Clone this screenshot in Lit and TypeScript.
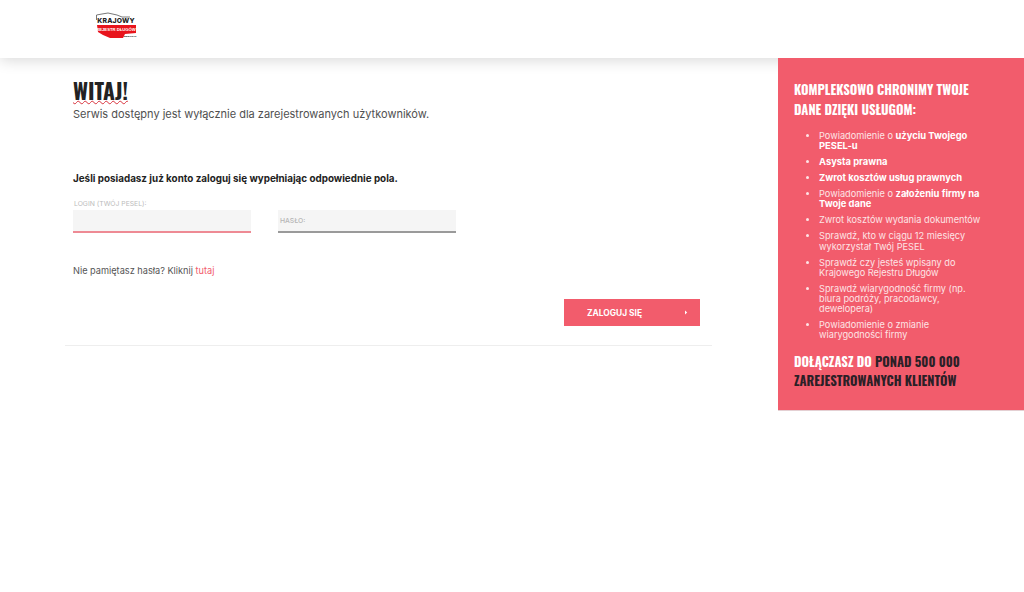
import { LitElement, html, css } from "lit";
import { customElement } from "lit/decorators.js";

const SERVICES = [
  html`Powiadomienie o <b>użyciu Twojego PESEL-u</b>`,
  html`<b>Asysta prawna</b>`,
  html`<b>Zwrot kosztów usług prawnych</b>`,
  html`Powiadomienie o <b>założeniu firmy na Twoje dane</b>`,
  html`Zwrot kosztów wydania dokumentów`,
  html`Sprawdź, kto w ciągu 12 miesięcy wykorzystał Twój PESEL`,
  html`Sprawdź czy jesteś wpisany do Krajowego Rejestru Długów`,
  html`Sprawdź wiarygodność firmy (np. biura podróży, pracodawcy, dewelopera)`,
  html`Powiadomienie o zmianie wiarygodności firmy`,
];

@customElement("app-root")
export class AppRoot extends LitElement {
  static styles = css`
    :host {
      display: block;
      height: 592px;
      background: #fff;
      font-family: "Inter", "Open Sans", sans-serif;
      color: #3d3d3d;
      overflow: hidden;
    }
    header {
      position: relative;
      z-index: 1;
      height: 58px;
      padding: 12px 0 0 95px;
      box-sizing: border-box;
      background: #fff;
      box-shadow: 0 2px 14px rgba(0, 0, 0, 0.16);
    }
    .logo {
      display: block;
      width: 42px;
      height: 28px;
    }
    .page {
      display: flex;
      align-items: flex-start;
      justify-content: space-between;
    }
    main {
      width: 647px;
      margin-left: 65px;
      padding: 20px 12px 19px 8px;
      box-sizing: border-box;
      border-bottom: 1px solid #eee;
    }
    h1 {
      margin: 0;
      font: bold 21.5px/24px "Liberation Sans Narrow", "Oswald", sans-serif;
      color: #222;
      text-decoration: underline wavy #d8323c 1px;
      text-underline-offset: 0;
    }
    .lead {
      margin: 3px 0 0;
      font-size: 11px;
      line-height: 18px;
      color: #505050;
    }
    .intro {
      margin: 47px 0 0;
      font-size: 9.85px;
      line-height: 16px;
      font-weight: 700;
      color: #222;
    }
    .fields {
      display: flex;
      align-items: flex-end;
      gap: 27px;
      margin-top: 13px;
    }
    .field {
      width: 178px;
    }
    .field label {
      display: block;
      padding-left: 1px;
      margin-bottom: 1px;
      font-size: 6.8px;
      line-height: 10px;
      color: #bbb;
    }
    .box {
      height: 21px;
      padding-left: 2px;
      display: flex;
      align-items: center;
      background: #f5f5f5;
      border-bottom: 2px solid #9a9a9a;
      font-size: 6.8px;
      font-weight: 500;
      color: #b5b5b5;
    }
    .box.active {
      border-bottom-color: #ee8a94;
    }
    .forgot {
      margin: 31px 0 0;
      font-size: 9.2px;
      line-height: 14px;
      color: #555;
    }
    .forgot a {
      color: #f25c6c;
      text-decoration: none;
    }
    .actions {
      display: flex;
      justify-content: flex-end;
      margin-top: 21px;
    }
    button {
      width: 136px;
      height: 27px;
      padding: 0 12px 0 23px;
      display: flex;
      align-items: center;
      justify-content: space-between;
      border: none;
      background: #f25c6c;
      color: #fff;
      font: 700 8.4px "Inter", "Open Sans", sans-serif;
    }
    button svg {
      width: 4px;
      height: 5px;
    }
    aside {
      position: relative;
      z-index: 2;
      width: 246px;
      height: 353px;
      padding: 22px 16px 0;
      box-sizing: border-box;
      background: #f25c6c;
      border-bottom: 1px solid #e4d0d3;
      color: #fff;
    }
    h2 {
      margin: 0;
      max-width: 190px;
      font: bold 12.8px/20px "Liberation Sans Narrow", "Oswald", sans-serif;
      text-transform: uppercase;
    }
    ul {
      margin: 11px 0 0;
      padding: 0 25px 0 25px;
      font-size: 9.2px;
      line-height: 10.2px;
      color: #fde4e6;
    }
    li {
      margin-bottom: 5.8px;
    }
    li b {
      color: #fff;
      font-size: 9.4px;
    }
    .join {
      margin-top: 11px;
      line-height: 19px;
    }
    .join span {
      color: #2b2027;
    }
  `;

  render() {
    return html`
      <header>
        <svg class="logo" viewBox="0 0 42 28" role="img" aria-label="Krajowy Rejestr Długów">
          <path d="M1.5 8 L1.5 3 L7 2 L13 1 L22 3 L27 5 L35 5" fill="none" stroke="#555" stroke-width="0.8" />
          <path d="M2 13 H41 V21 L30 22 L28 26 L15 26 L8 23 L3 20 Z" fill="#e8141c" />
          <text x="21" y="11.2" text-anchor="middle" font-family="Inter, sans-serif" font-size="6.8" font-weight="800" letter-spacing="0.2" fill="#222">KRAJOWY</text>
          <text x="21" y="19" text-anchor="middle" font-family="Liberation Sans, sans-serif" font-size="4.2" font-weight="700" fill="#fff">REJESTR DŁUGÓW</text>
          <text x="35" y="25" text-anchor="middle" font-family="Liberation Sans, sans-serif" font-size="2.4" font-weight="700" fill="#222">www.krd.pl</text>
        </svg>
      </header>
      <div class="page">
        <main>
          <h1>WITAJ!</h1>
          <p class="lead">Serwis dostępny jest wyłącznie dla zarejestrowanych użytkowników.</p>
          <p class="intro">Jeśli posiadasz już konto zaloguj się wypełniając odpowiednie pola.</p>
          <div class="fields">
            <div class="field">
              <label>LOGIN (TWÓJ PESEL):</label>
              <div class="box active"></div>
            </div>
            <div class="field">
              <div class="box">HASŁO:</div>
            </div>
          </div>
          <p class="forgot">Nie pamiętasz hasła? Kliknij <a href="#">tutaj</a></p>
          <div class="actions">
            <button>
              ZALOGUJ SIĘ
              <svg viewBox="0 0 4 5"><path d="M1 0.5 L3.2 2.5 L1 4.5 Z" fill="#fff" /></svg>
            </button>
          </div>
        </main>
        <aside>
          <h2>Kompleksowo chronimy Twoje dane dzięki usługom:</h2>
          <ul>
            ${SERVICES.map((s) => html`<li>${s}</li>`)}
          </ul>
          <h2 class="join">Dołączasz do <span>ponad 500 000 zarejestrowanych klientów</span></h2>
        </aside>
      </div>
    `;
  }
}
